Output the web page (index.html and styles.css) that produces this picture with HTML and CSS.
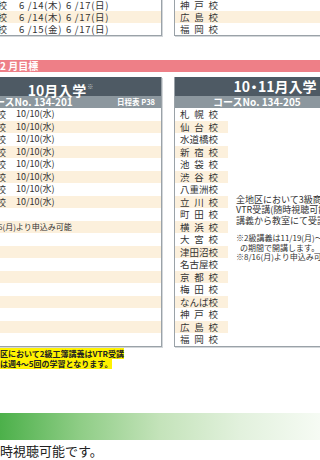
FILE: index.html
```html
<!DOCTYPE html>
<html lang="ja">
<head>
<meta charset="utf-8">
<title>schedule</title>
<link rel="stylesheet" href="styles.css">
</head>
<body>
<div class="page">
  <div class="top">
    <div class="tbox tleft">
      <div class="trow"><span class="nm">神戸校</span><span class="d1">6 /14(木)</span><span class="d2">6 /17(日)</span></div>
      <div class="trow hl"><span class="nm">広島校</span><span class="d1">6 /14(木)</span><span class="d2">6 /17(日)</span></div>
      <div class="trow"><span class="nm">福岡校</span><span class="d1">6 /15(金)</span><span class="d2">6 /17(日)</span></div>
    </div>
    <div class="tbox tright">
      <div class="trow"><span class="nm">神戸校</span></div>
      <div class="trow hl"><span class="nm">広島校</span></div>
      <div class="trow"><span class="nm">福岡校</span></div>
    </div>
  </div>

  <div class="pink"><span class="pink-t">2 月目標</span></div>

  <div class="panels">
    <div class="panel pl">
      <div class="ph">10月入学<span class="kome">※</span></div>
      <div class="psub"><span class="cno">コースNo. 134-201</span><span class="nittei">日程表 P38</span></div>
      <div class="rows">
        <div class="r"><span class="nm">札幌校</span><span class="dt">10/10(水)</span></div>
        <div class="r"><span class="nm">仙台校</span><span class="dt">10/10(水)</span></div>
        <div class="r"><span class="nm">水道橋校</span><span class="dt">10/10(水)</span></div>
        <div class="r"><span class="nm">新宿校</span><span class="dt">10/10(水)</span></div>
        <div class="r"><span class="nm">池袋校</span><span class="dt">10/10(水)</span></div>
        <div class="r"><span class="nm">渋谷校</span><span class="dt">10/10(水)</span></div>
        <div class="r"><span class="nm">八重洲校</span><span class="dt">10/10(水)</span></div>
        <div class="r"><span class="nm">立川校</span><span class="dt">10/10(水)</span></div>
        <div class="r"></div>
        <div class="r"><span class="memo">※8/16(月)より申込み可能</span></div>
        <div class="r"></div>
        <div class="r"></div>
        <div class="r"></div>
        <div class="r"></div>
        <div class="r"></div>
        <div class="r"></div>
        <div class="r"></div>
        <div class="r"></div>
        <div class="r"></div>
      </div>
    </div>

    <div class="panel pr">
      <div class="ph">10<span class="dot">・</span>11月入学</div>
      <div class="psub"><span class="cno cno-r">コースNo. 134-205</span></div>
      <div class="pbody">
        <div class="names">
          <div class="n"><span class="nm">札幌校</span></div>
          <div class="n"><span class="nm">仙台校</span></div>
          <div class="n"><span class="nm">水道橋校</span></div>
          <div class="n"><span class="nm">新宿校</span></div>
          <div class="n"><span class="nm">池袋校</span></div>
          <div class="n"><span class="nm">渋谷校</span></div>
          <div class="n"><span class="nm">八重洲校</span></div>
          <div class="n"><span class="nm">立川校</span></div>
          <div class="n"><span class="nm">町田校</span></div>
          <div class="n"><span class="nm">横浜校</span></div>
          <div class="n"><span class="nm">大宮校</span></div>
          <div class="n"><span class="nm">津田沼校</span></div>
          <div class="n"><span class="nm">名古屋校</span></div>
          <div class="n"><span class="nm">京都校</span></div>
          <div class="n"><span class="nm">梅田校</span></div>
          <div class="n"><span class="nm">なんば校</span></div>
          <div class="n"><span class="nm">神戸校</span></div>
          <div class="n"><span class="nm">広島校</span></div>
          <div class="n"><span class="nm">福岡校</span></div>
        </div>
        <div class="notes">
          <p class="nl">全地区において3級商業簿記講義は</p>
          <p class="nl">VTR受講(随時視聴可能)。2級</p>
          <p class="nl">講義から教室にて受講となります。</p>
          <p class="ns first">※2級講義は11/19(月)～1/28(月)</p>
          <p class="ns ind">の期間で開講します。</p>
          <p class="ns">※8/16(月)より申込み可能</p>
        </div>
      </div>
    </div>
  </div>

  <div class="foot">
    <p class="fl"><span class="mk">区において2級工簿講義はVTR受講</span></p>
    <p class="fl"><span class="mk">は週4～5回の学習となります。</span></p>
  </div>

  <div class="green"></div>
  <p class="big">時視聴可能です。</p>
</div>
</body>
</html>
```

FILE: styles.css
```css
html, body {
  margin: 0;
  padding: 0;
}
body {
  width: 320px;
  height: 460px;
  overflow: hidden;
  background: #ffffff;
  font-family: "Noto Sans CJK JP", "Noto Sans", sans-serif;
  color: #333333;
}
p {
  margin: 0;
}
.page {
  width: 320px;
  overflow: hidden;
}

/* names justified across fixed width */
.nm {
  display: inline-block;
  width: 38px;
  font-size: 9.5px;
  text-align: justify;
  text-align-last: justify;
  white-space: nowrap;
  line-height: 12px;
}

/* ---------- top section ---------- */
.top {
  display: flex;
  margin-top: -1px;
}
.tbox {
  border-bottom: 1px solid #9aa2a8;
  box-shadow: 1px 1px 0 #d3d7da;
}
.tleft {
  margin-left: -40px;
  width: 201px;
  flex: none;
  border-right: 1px solid #9aa2a8;
}
.tright {
  margin-left: 12px;
  flex: 1;
  border-left: 1px solid #9aa2a8;
}
.trow {
  height: 12px;
  display: flex;
  align-items: center;
  font-size: 9.5px;
  line-height: 12px;
  white-space: nowrap;
}
.tleft .trow {
  padding-left: 9px;
}
.tright .trow {
  padding-left: 5px;
}
.trow.hl {
  background: #fcf0dc;
}
.d1,
.d2 {
  letter-spacing: 0.7px;
}
.d1 {
  margin-left: 12px;
  width: 47px;
}

/* ---------- pink bar ---------- */
.pink {
  margin-top: 24px;
  height: 12px;
  background: #ee7f87;
  display: flex;
  align-items: center;
}
.pink-t {
  color: #ffffff;
  font-weight: 700;
  font-size: 10px;
  line-height: 12px;
}

/* ---------- panels ---------- */
.panels {
  display: flex;
  margin-top: 5px;
}
.panel {
  border-bottom: 1px solid #9aa2a8;
  box-shadow: 1px 1px 0 #d3d7da;
}
.pl {
  margin-left: -40px;
  width: 201px;
  border-right: 1px solid #9aa2a8;
  flex: none;
}
.pr {
  margin-left: 12px;
  width: 200px;
  flex: none;
  border-left: 1px solid #9aa2a8;
}
.ph {
  height: 19px;
  background: #4e5a64;
  color: #ffffff;
  font-weight: 700;
  font-size: 14px;
  line-height: 19px;
  text-align: center;
  white-space: nowrap;
}
.dot {
  margin: 0 -3px;
}
.kome {
  font-size: 6px;
  font-weight: 400;
  color: #c9ced2;
  vertical-align: 7px;
  margin-left: 1px;
}
.psub {
  height: 12px;
  background: #8c979e;
  color: #ffffff;
  display: flex;
  align-items: center;
  justify-content: space-between;
  padding-left: 25px;
  padding-right: 6px;
  white-space: nowrap;
}
.cno {
  font-size: 10px;
  font-weight: 700;
  line-height: 12px;
}
.cno-r {
  margin-left: 13px;
}
.nittei {
  font-size: 7.5px;
  font-weight: 700;
  line-height: 12px;
}

.rows .r {
  height: 12.5px;
  display: flex;
  align-items: center;
  padding-left: 8px;
  white-space: nowrap;
}
.rows .r:nth-child(even) {
  background: #fcf0dc;
}
.dt {
  margin-left: 10px;
  font-size: 9px;
  line-height: 12px;
}
.memo {
  margin-left: 10px;
  font-size: 8px;
  line-height: 12px;
  color: #333333;
}

.pbody {
  display: flex;
}
.names {
  width: 53px;
  flex: none;
}
.names .n {
  height: 12.5px;
  display: flex;
  align-items: center;
  padding-left: 5px;
}
.names .n:nth-child(even) {
  background: #fcf0dc;
}
.notes {
  flex: 1;
  display: flex;
  flex-direction: column;
  justify-content: center;
  padding-left: 8px;
  padding-top: 3px;
  overflow: hidden;
  white-space: nowrap;
}
.nl {
  font-size: 9px;
  line-height: 10.5px;
}
.ns {
  font-size: 8px;
  line-height: 9.5px;
}
.ns.first {
  margin-top: 7px;
}
.ns.ind {
  padding-left: 4px;
}

/* ---------- foot notes ---------- */
.foot {
  margin-top: 2px;
}
.fl {
  font-size: 8px;
  line-height: 10px;
  font-weight: 700;
  color: #222222;
  white-space: nowrap;
}
.mk {
  background: #fff200;
}

/* ---------- green bar ---------- */
.green {
  margin-top: 44px;
  height: 27px;
  background: linear-gradient(to right, #4cb04a 0%, #8fcd86 25%, #c4e3ba 50%, #e2f1dd 75%, #f6fbf4 100%);
}
.big {
  margin-top: 3px;
  font-size: 13px;
  line-height: 16px;
  color: #222222;
  white-space: nowrap;
}
```
